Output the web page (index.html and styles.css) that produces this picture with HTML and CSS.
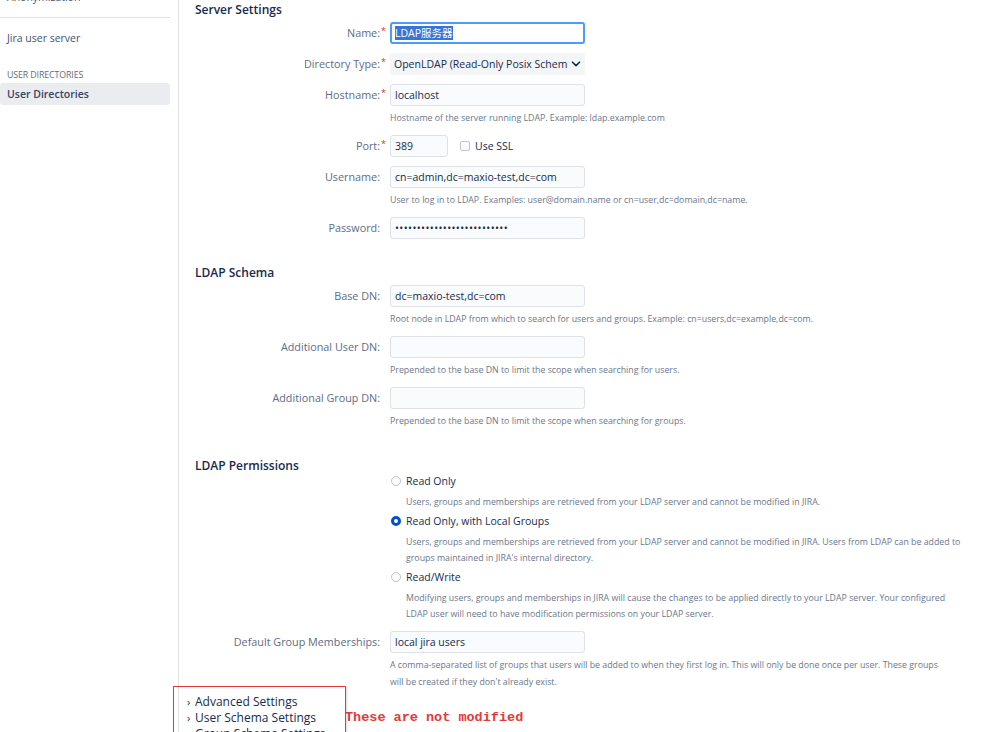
FILE: index.html
```html
<!DOCTYPE html>
<html lang="en">
<head>
<meta charset="utf-8">
<title>LDAP Server Settings</title>
<link rel="stylesheet" href="styles.css">
</head>
<body>
<div class="page">
  <aside class="sidebar">
    <div class="nav-item nav-cut">Anonymization</div>
    <div class="nav-sep"></div>
    <div class="nav-item">Jira user server</div>
    <div class="nav-heading">USER DIRECTORIES</div>
    <div class="nav-item nav-active">User Directories</div>
  </aside>
  <main class="main">
    <h3 class="section-title">Server Settings</h3>
    <div class="field">
      <label class="field-label">Name:<span class="req">*</span></label>
      <div class="field-body"><div class="input input-focus"><span class="selected">LDAP服务器</span></div></div>
    </div>
    <div class="field">
      <label class="field-label">Directory Type:<span class="req">*</span></label>
      <div class="field-body"><div class="select"><span class="select-text">OpenLDAP (Read-Only Posix Schem</span>
        <svg class="chev" viewBox="0 0 10 10" width="10" height="10"><path d="M1.5 3.2 L5 6.6 L8.5 3.2" fill="none" stroke="#172b4d" stroke-width="1.6" stroke-linecap="round" stroke-linejoin="round"/></svg></div></div>
    </div>
    <div class="field">
      <label class="field-label">Hostname:<span class="req">*</span></label>
      <div class="field-body"><div class="input">localhost</div>
        <div class="desc">Hostname of the server running LDAP. Example: ldap.example.com</div></div>
    </div>
    <div class="field">
      <label class="field-label">Port:<span class="req">*</span></label>
      <div class="field-body"><div class="port-row"><div class="input input-short">389</div>
        <span class="checkbox"></span><span class="check-label">Use SSL</span></div></div>
    </div>
    <div class="field">
      <label class="field-label">Username:</label>
      <div class="field-body"><div class="input">cn=admin,dc=maxio-test,dc=com</div>
        <div class="desc">User to log in to LDAP. Examples: user@domain.name or cn=user,dc=domain,dc=name.</div></div>
    </div>
    <div class="field">
      <label class="field-label">Password:</label>
      <div class="field-body"><div class="input password">••••••••••••••••••••••••••</div></div>
    </div>

    <h3 class="section-title section-gap">LDAP Schema</h3>
    <div class="field">
      <label class="field-label">Base DN:</label>
      <div class="field-body"><div class="input">dc=maxio-test,dc=com</div>
        <div class="desc">Root node in LDAP from which to search for users and groups. Example: cn=users,dc=example,dc=com.</div></div>
    </div>
    <div class="field">
      <label class="field-label">Additional User DN:</label>
      <div class="field-body"><div class="input"></div>
        <div class="desc">Prepended to the base DN to limit the scope when searching for users.</div></div>
    </div>
    <div class="field">
      <label class="field-label">Additional Group DN:</label>
      <div class="field-body"><div class="input"></div>
        <div class="desc">Prepended to the base DN to limit the scope when searching for groups.</div></div>
    </div>

    <h3 class="section-title perm-title">LDAP Permissions</h3>
    <div class="field">
      <div class="field-label"></div>
      <div class="field-body radios">
        <div class="radio-row"><span class="radio"></span><span class="radio-label">Read Only</span></div>
        <div class="radio-desc">Users, groups and memberships are retrieved from your LDAP server and cannot be modified in JIRA.</div>
        <div class="radio-row"><span class="radio radio-on"></span><span class="radio-label">Read Only, with Local Groups</span></div>
        <div class="radio-desc">Users, groups and memberships are retrieved from your LDAP server and cannot be modified in JIRA. Users from LDAP can be added to groups maintained in JIRA's internal directory.</div>
        <div class="radio-row"><span class="radio"></span><span class="radio-label">Read/Write</span></div>
        <div class="radio-desc">Modifying users, groups and memberships in JIRA will cause the changes to be applied directly to your LDAP server. Your configured LDAP user will need to have modification permissions on your LDAP server.</div>
      </div>
    </div>
    <div class="field">
      <label class="field-label">Default Group Memberships:</label>
      <div class="field-body"><div class="input">local jira users</div>
        <div class="desc desc-wide">A comma-separated list of groups that users will be added to when they first log in. This will only be done once per user. These groups will be created if they don't already exist.</div></div>
    </div>

    <div class="expanders">
      <div class="expander"><span class="exp-chev">›</span>Advanced Settings</div>
      <div class="expander"><span class="exp-chev">›</span>User Schema Settings</div>
      <div class="expander"><span class="exp-chev">›</span>Group Schema Settings</div>
      <div class="annot-box"></div>
      <div class="annot-text">These are not modified</div>
    </div>
  </main>
</div>
</body>
</html>
```
FILE: styles.css
```css
* { box-sizing: border-box; }
html, body { margin: 0; padding: 0; background: #fff; }
body {
  font-family: "Open Sans", "Noto Sans", "Noto Sans CJK SC", sans-serif;
  color: #172b4d;
  overflow: hidden;
  height: 732px;
}
.page { display: flex; align-items: stretch; min-height: 732px; }

.sidebar {
  width: 179px;
  flex: none;
  border-right: 1px solid #dfe1e6;
  padding-right: 8px;
  margin-top: -12px;
}
.nav-item {
  font-size: 10.5px;
  line-height: 22px;
  color: #42526e;
  padding-left: 7px;
}
.nav-cut { line-height: 18px; }
.nav-sep { height: 1px; background: #dfe1e6; margin: 11px 0 9px; }
.nav-heading {
  font-size: 8.8px;
  color: #5e6c84;
  padding-left: 7px;
  margin-top: 19px;
  line-height: 14px;
  letter-spacing: -0.1px;
}
.nav-active {
  background: #ebecf0;
  border-radius: 3px;
  color: #344563;
  font-weight: 600;
  margin-top: 1px;
}

.main { flex: 1; padding: 2px 0 0 16px; position: relative; }

.section-title {
  margin: 0 0 4px;
  font-size: 12px;
  line-height: 16px;
  font-weight: 600;
  color: #172b4d;
}
.section-gap { margin-top: 26px; }
.perm-title { margin-top: 29px; margin-bottom: -2px; }

.field { display: flex; margin-bottom: 9px; }
.field-label {
  width: 195px;
  flex: none;
  text-align: right;
  font-size: 10.8px;
  line-height: 22px;
  height: 22px;
  color: #5e6c84;
  padding-right: 10px;
  font-weight: 500;
  white-space: nowrap;
}
.req { color: #de350b; font-size: 9px; line-height: 0; vertical-align: 3px; margin-right: -6px; margin-left: 1px; }
.field-body { flex: 1; min-width: 0; }

.input {
  width: 195px;
  height: 22px;
  border: 1px solid #dfe1e6;
  background: #fafbfc;
  border-radius: 3px;
  font-size: 10.5px;
  line-height: 20px;
  padding: 0 4px;
  color: #172b4d;
  white-space: nowrap;
  overflow: hidden;
}
.input-focus { border: 2px solid #4c9aff; background: #fff; line-height: 18px; padding: 0 3px; }
.selected { background: #3875d7; color: #fff; font-family: "Open Sans", "Noto Sans CJK SC", sans-serif; }
.input-short { width: 58px; }
.password { font-size: 10.5px; letter-spacing: 0.4px; }

.select {
  width: 195px;
  height: 22px;
  background: #f4f5f7;
  border-radius: 3px;
  display: flex;
  align-items: center;
  padding: 0 4px;
  font-size: 10.5px;
}
.select-text { flex: 1; white-space: nowrap; overflow: hidden; }
.chev { flex: none; margin-left: 2px; }

.port-row { display: flex; align-items: center; }
.checkbox {
  width: 10px; height: 10px;
  border: 1px solid #c1c7d0;
  border-radius: 2px;
  background: #fafbfc;
  margin-left: 12px;
}
.check-label { font-size: 10.5px; margin-left: 5px; color: #172b4d; }

.desc {
  font-size: 8.8px;
  line-height: 16px;
  color: #6b778c;
  margin-top: 4px;
  white-space: nowrap;
}
.desc-wide { white-space: normal; max-width: 562px; line-height: 17px; margin-top: 4px; }

.radios { padding-left: 1px; }
.radio-row { display: flex; align-items: center; height: 18px; margin-top: 2px; }
.radio-row:first-child { margin-top: 0; }
.radio {
  width: 10px; height: 10px;
  border-radius: 50%;
  border: 1px solid #c1c7d0;
  background: #fafbfc;
  flex: none;
}
.radio-on { border: 3px solid #0052cc; background: #fff; }
.radio-label { font-size: 10.5px; margin-left: 5px; color: #172b4d; }
.radio-desc {
  font-size: 8.8px;
  line-height: 16px;
  color: #6b778c;
  padding-left: 15px;
  margin-top: 4px;
  max-width: 578px;
}

.expanders { margin-top: -6px; position: relative; }
.expander {
  font-family: "Open Sans", "Noto Sans", sans-serif;
  font-size: 12px;
  line-height: 16px;
  color: #172b4d;
  white-space: nowrap;
}
.exp-chev { display: inline-block; width: 8px; margin-left: -8px; font-size: 11px; }
.annot-box {
  position: absolute;
  left: -22px;
  top: -8px;
  width: 173px;
  height: 70px;
  border: 1px solid #e53935;
  box-shadow: 1px 1px 2px rgba(0,0,0,0.15);
}
.annot-text {
  position: absolute;
  left: 150px;
  top: 16px;
  font-family: "Liberation Mono", "DejaVu Sans Mono", monospace;
  font-weight: bold;
  font-size: 13.5px;
  line-height: 16px;
  color: #e53935;
  white-space: nowrap;
}
```
